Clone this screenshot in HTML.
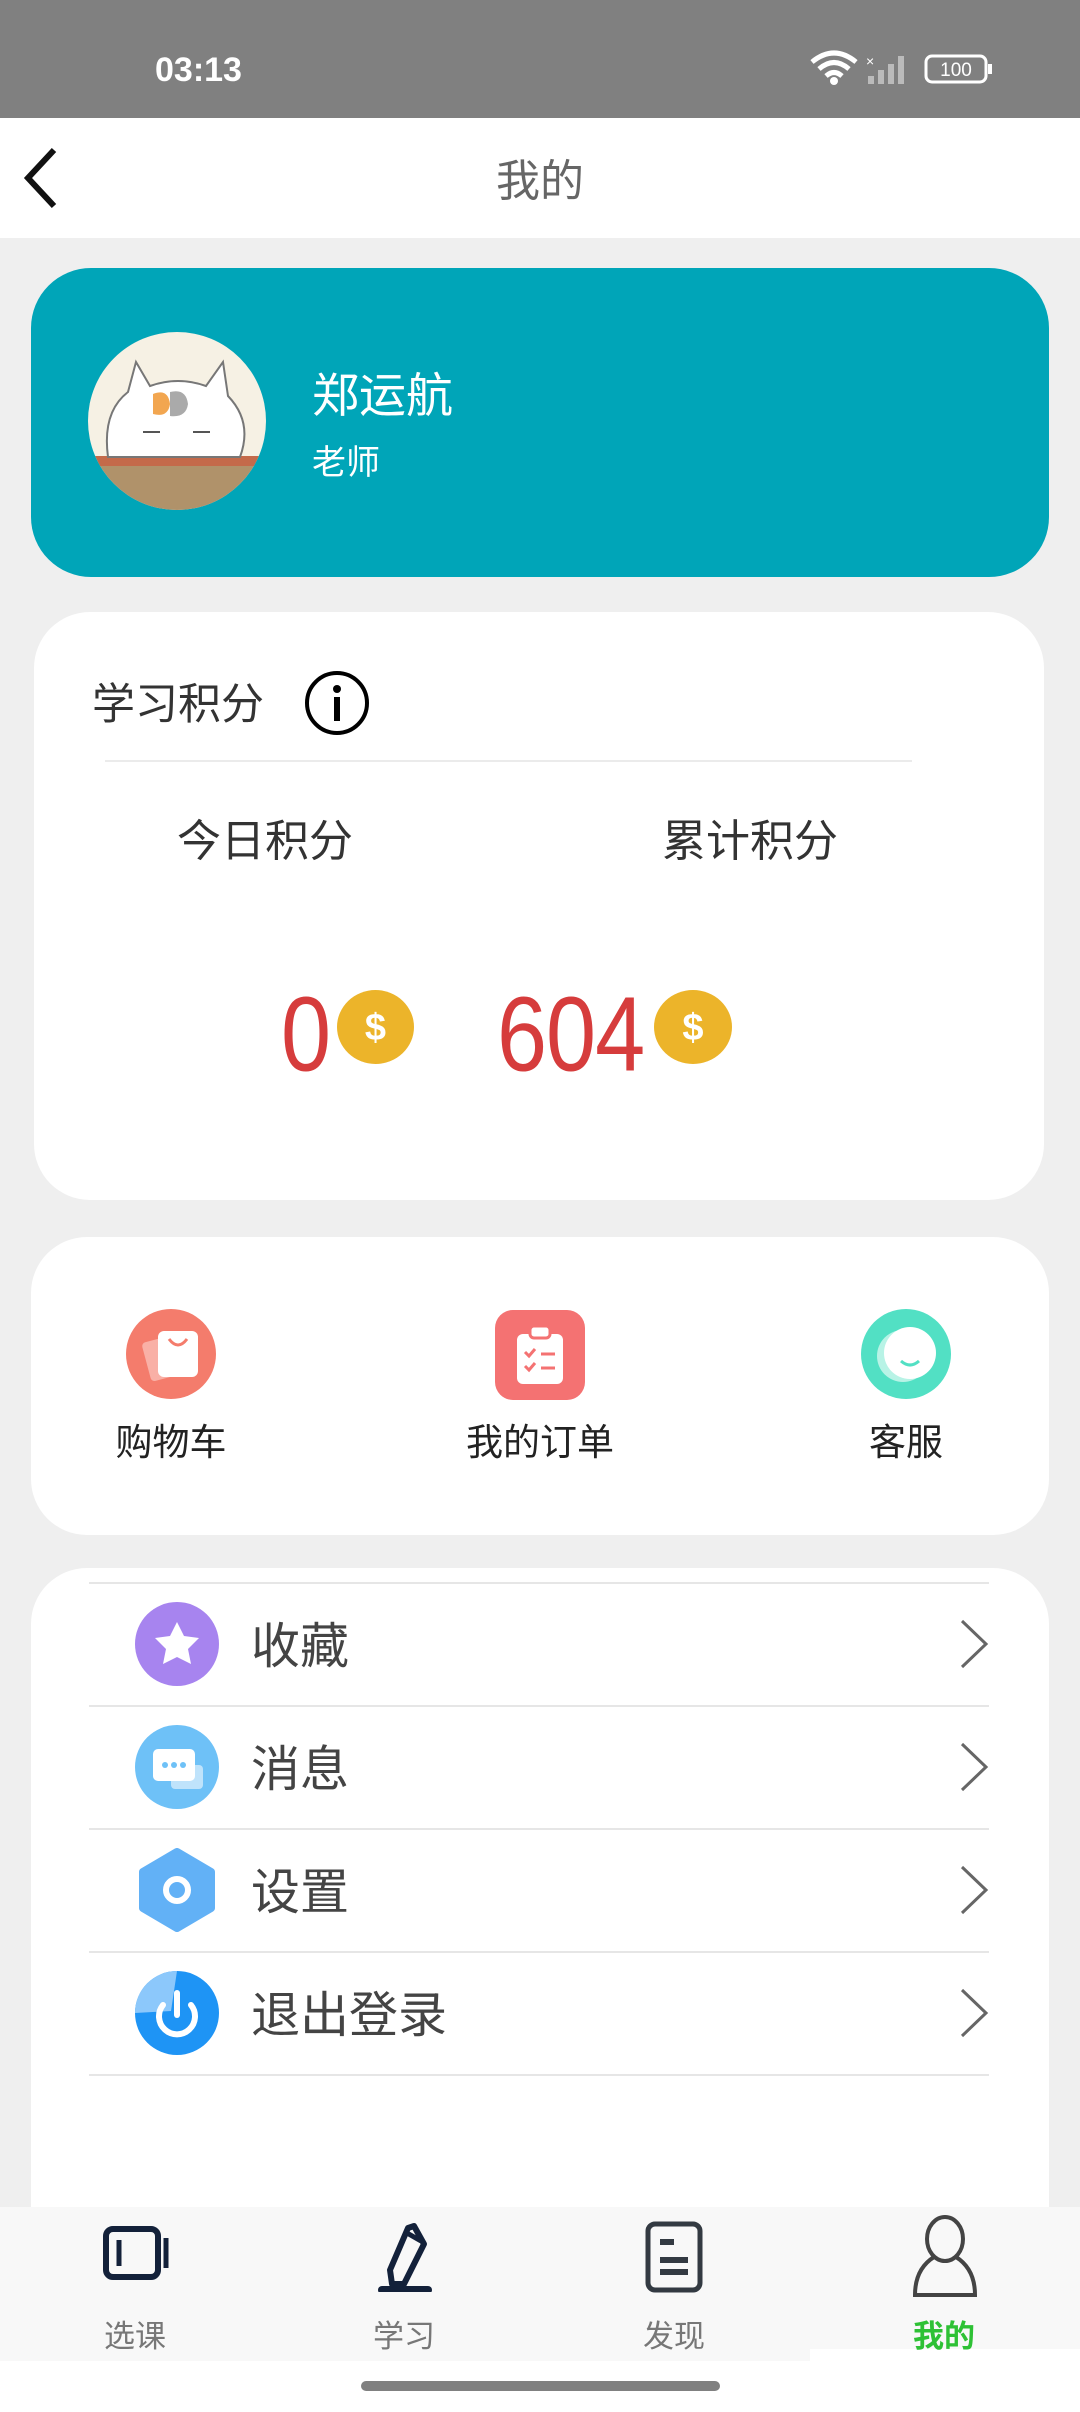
<!DOCTYPE html>
<html><head><meta charset="utf-8"><style>
*{margin:0;padding:0;box-sizing:border-box}
body{width:1080px;height:2412px;background:#efefef;position:relative;overflow:hidden;font-family:"Liberation Sans","Noto Sans CJK SC",sans-serif}
.a{position:absolute}
.card{position:absolute;background:#fff;border-radius:56px}
.t{position:absolute;white-space:nowrap;line-height:1}
.row{position:absolute;left:89px;width:900px;height:2px;background:#e6e6e6}
.lbl{position:absolute;left:251px;font-size:49px;color:#444;line-height:1}
.chev{position:absolute;left:958px;width:34px;height:52px}
</style></head><body>
<div class="a" style="left:0;top:0;width:1080px;height:118px;background:#808080"></div>
<div class="t" style="left:155px;top:53px;font-size:34px;font-weight:bold;color:#fff">03:13</div>
<svg class="a" style="left:808px;top:48px" width="190" height="40" viewBox="0 0 190 40">
<path d="M4 14 Q26 -4 48 14" stroke="#fff" stroke-width="5" fill="none"/>
<path d="M11 21 Q26 8 41 21" stroke="#fff" stroke-width="5" fill="none"/>
<path d="M18 28 Q26 21 34 28" stroke="#fff" stroke-width="5" fill="none"/>
<circle cx="26" cy="33" r="4" fill="#fff"/>
<text x="58" y="18" font-size="14" fill="#fff" font-family="Liberation Sans">×</text>
<rect x="60" y="28" width="6" height="8" fill="#bbb"/><rect x="70" y="22" width="6" height="14" fill="#bbb"/><rect x="80" y="16" width="6" height="20" fill="#bbb"/><rect x="90" y="8" width="6" height="28" fill="#bbb"/>
<rect x="118" y="8" width="60" height="26" rx="6" stroke="#fff" stroke-width="3" fill="none"/>
<rect x="180" y="16" width="4" height="10" fill="#fff"/>
<text x="148" y="28" font-size="19" fill="#fff" text-anchor="middle" font-family="Liberation Sans">100</text>
</svg>
<div class="a" style="left:0;top:118px;width:1080px;height:120px;background:#fff"></div>
<svg class="a" style="left:18px;top:146px" width="44" height="64"><path d="M36 4 L10 32 L36 60" stroke="#111" stroke-width="6" fill="none"/></svg>
<div class="t" style="left:0;width:1080px;text-align:center;top:160px;font-size:44px;color:#666">我的</div>

<div class="a" style="left:31px;top:268px;width:1018px;height:309px;background:#00a5b8;border-radius:60px"></div>
<svg class="a" style="left:88px;top:332px" width="178" height="178" viewBox="0 0 178 178">
<defs><clipPath id="c"><circle cx="89" cy="89" r="89"/></clipPath></defs>
<g clip-path="url(#c)"><rect width="178" height="178" fill="#f6f1e4"/>
<rect x="0" y="130" width="178" height="48" fill="#b0926a"/>
<rect x="0" y="124" width="178" height="10" fill="#c46a4a"/>
<path d="M20 125 Q14 80 40 60 L48 30 L62 54 Q90 44 118 54 L135 30 L140 64 Q165 90 152 125 Z" fill="#fff" stroke="#777" stroke-width="2"/>
<path d="M65 62 Q80 56 82 72 Q80 86 65 82 Z" fill="#f2a650"/>
<path d="M82 60 Q98 56 100 72 Q98 86 82 84 Z" fill="#aaa"/>
<path d="M55 100 L72 100 M105 100 L122 100" stroke="#555" stroke-width="2"/>
</g></svg>
<div class="t" style="left:312px;top:372px;font-size:47px;color:#fff">郑运航</div>
<div class="t" style="left:312px;top:446px;font-size:34px;color:#fff">老师</div>

<div class="card" style="left:34px;top:612px;width:1010px;height:588px"></div>
<div class="t" style="left:92px;top:684px;font-size:43px;color:#333">学习积分</div>
<svg class="a" style="left:304px;top:670px" width="66" height="66"><circle cx="33" cy="33" r="30" stroke="#000" stroke-width="4" fill="none"/><circle cx="33" cy="19" r="4" fill="#000"/><rect x="30" y="27" width="6" height="24" fill="#000"/></svg>
<div class="a" style="left:105px;top:760px;width:807px;height:2px;background:#ebebeb"></div>
<div class="t" style="left:165px;width:200px;text-align:center;top:820px;font-size:44px;color:#333">今日积分</div>
<div class="t" style="left:650px;width:200px;text-align:center;top:820px;font-size:44px;color:#333">累计积分</div>
<div class="t" style="left:281px;top:982px;font-size:90px;color:#d63c3c;transform:scaleY(1.18);transform-origin:left top">0</div>
<div class="t" style="left:497px;top:982px;font-size:90px;color:#d63c3c;transform:scaleY(1.18);transform-origin:left top;letter-spacing:-1px">604</div>
<svg class="a" style="left:337px;top:990px" width="77" height="74"><ellipse cx="38.5" cy="37" rx="38.5" ry="37" fill="#ecb42a"/><text x="38.5" y="50" font-size="38" font-weight="bold" fill="#fff" text-anchor="middle" font-family="Liberation Sans">$</text></svg>
<svg class="a" style="left:654px;top:990px" width="78" height="74"><ellipse cx="39" cy="37" rx="39" ry="37" fill="#ecb42a"/><text x="39" y="50" font-size="38" font-weight="bold" fill="#fff" text-anchor="middle" font-family="Liberation Sans">$</text></svg>

<div class="card" style="left:31px;top:1237px;width:1018px;height:298px"></div>
<svg class="a" style="left:126px;top:1309px" width="90" height="90"><ellipse cx="45" cy="45" rx="45" ry="45" fill="#f47c6c"/><rect x="20" y="30" width="28" height="40" rx="4" fill="#f9b0a6" transform="rotate(-15 34 50)"/><rect x="32" y="22" width="40" height="46" rx="6" fill="#fff"/><path d="M43 30 Q52 42 61 30" stroke="#f47c6c" stroke-width="3" fill="none"/></svg>
<svg class="a" style="left:495px;top:1310px" width="90" height="90"><rect width="90" height="90" rx="18" fill="#f47272"/><rect x="22" y="24" width="46" height="50" rx="6" fill="#fff"/><rect x="35" y="16" width="20" height="12" rx="4" fill="#fff" stroke="#f47272" stroke-width="3"/><path d="M30 42 l4 4 l6 -7 M30 56 l4 4 l6 -7" stroke="#f47272" stroke-width="3" fill="none"/><path d="M46 44 h14 M46 58 h14" stroke="#f47272" stroke-width="3"/></svg>
<svg class="a" style="left:861px;top:1309px" width="90" height="90"><circle cx="45" cy="45" r="45" fill="#52e0c4"/><circle cx="42" cy="47" r="26" fill="#b8f3e6"/><circle cx="49" cy="44" r="26" fill="#fff"/><path d="M40 52 Q49 60 58 52" stroke="#52e0c4" stroke-width="3" fill="none"/></svg>
<div class="t" style="left:91px;width:160px;text-align:center;top:1424px;font-size:37px;color:#222">购物车</div>
<div class="t" style="left:440px;width:200px;text-align:center;top:1424px;font-size:37px;color:#222">我的订单</div>
<div class="t" style="left:826px;width:160px;text-align:center;top:1424px;font-size:37px;color:#222">客服</div>

<div class="card" style="left:31px;top:1568px;width:1018px;height:700px"></div>
<div class="row" style="top:1582px"></div>
<div class="row" style="top:1705px"></div>
<div class="row" style="top:1828px"></div>
<div class="row" style="top:1951px"></div>
<div class="row" style="top:2074px"></div>

<svg class="a" style="left:135px;top:1602px" width="84" height="84"><circle cx="42" cy="42" r="42" fill="#a784ef"/><path d="M42 20 L49 34 L64 36 L53 47 L56 62 L42 55 L28 62 L31 47 L20 36 L35 34 Z" fill="#fff"/></svg>
<div class="lbl" style="top:1623px">收藏</div>
<svg class="a" style="left:135px;top:1725px" width="84" height="84"><circle cx="42" cy="42" r="42" fill="#6ec1f7"/><rect x="36" y="40" width="32" height="24" rx="4" fill="#bfe3fb"/><rect x="18" y="24" width="42" height="32" rx="5" fill="#fff"/><circle cx="30" cy="40" r="3" fill="#6ec1f7"/><circle cx="39" cy="40" r="3" fill="#6ec1f7"/><circle cx="48" cy="40" r="3" fill="#6ec1f7"/></svg>
<div class="lbl" style="top:1746px">消息</div>
<svg class="a" style="left:135px;top:1848px" width="84" height="84"><path d="M42 4 L76 24 L76 60 L42 80 L8 60 L8 24 Z" fill="#62b1f6" stroke="#62b1f6" stroke-width="8" stroke-linejoin="round"/><circle cx="42" cy="42" r="11" fill="none" stroke="#fff" stroke-width="6"/></svg>
<div class="lbl" style="top:1869px">设置</div>
<svg class="a" style="left:135px;top:1971px" width="84" height="84"><circle cx="42" cy="42" r="42" fill="#1e94f5"/><path d="M0 42 A42 42 0 0 1 42 0 L36 40 Z" fill="#8cc8fb"/><path d="M28 34 A18 18 0 1 0 56 34" stroke="#fff" stroke-width="6" fill="none" stroke-linecap="round"/><path d="M42 22 V44" stroke="#fff" stroke-width="6" stroke-linecap="round"/></svg>
<div class="lbl" style="top:1992px">退出登录</div>
<svg class="chev" style="top:1618px" viewBox="0 0 34 52"><path d="M4 3 L28 26 L4 49" stroke="#666" stroke-width="3" fill="none"/></svg>
<svg class="chev" style="top:1741px" viewBox="0 0 34 52"><path d="M4 3 L28 26 L4 49" stroke="#666" stroke-width="3" fill="none"/></svg>
<svg class="chev" style="top:1864px" viewBox="0 0 34 52"><path d="M4 3 L28 26 L4 49" stroke="#666" stroke-width="3" fill="none"/></svg>
<svg class="chev" style="top:1987px" viewBox="0 0 34 52"><path d="M4 3 L28 26 L4 49" stroke="#666" stroke-width="3" fill="none"/></svg>

<div class="a" style="left:0;top:2207px;width:1080px;height:205px;background:#fff"></div>
<div class="a" style="left:0;top:2207px;width:810px;height:154px;background:#f8f8f8"></div>
<div class="a" style="left:810px;top:2207px;width:270px;height:142px;background:#f8f8f8"></div>
<svg class="a" style="left:102px;top:2225px" width="70" height="60"><rect x="4" y="4" width="52" height="48" rx="7" stroke="#13213a" stroke-width="6" fill="none"/><path d="M17 15 V41 M64 13 V43" stroke="#13213a" stroke-width="5"/></svg>
<svg class="a" style="left:374px;top:2220px" width="60" height="72"><path d="M40 6 L50 24 L30 64 L18 64 L16 50 L34 8 Z" stroke="#13213a" stroke-width="6" fill="none" stroke-linejoin="round"/><path d="M33 13 L47 21" stroke="#13213a" stroke-width="5"/><rect x="4" y="66" width="54" height="8" rx="4" fill="#13213a"/></svg>
<svg class="a" style="left:644px;top:2220px" width="62" height="76"><rect x="4" y="4" width="52" height="66" rx="7" stroke="#333a42" stroke-width="5" fill="none"/><path d="M16 22 H30 M16 40 H44 M16 52 H44" stroke="#333a42" stroke-width="6"/></svg>
<svg class="a" style="left:912px;top:2215px" width="66" height="84"><ellipse cx="33" cy="24" rx="18" ry="22" stroke="#444" stroke-width="4" fill="none"/><path d="M22 42 Q3 54 3 80 H63 Q63 54 44 42" stroke="#444" stroke-width="4" fill="none"/></svg>
<div class="t" style="left:85px;width:100px;text-align:center;top:2321px;font-size:31px;color:#777">选课</div>
<div class="t" style="left:354px;width:100px;text-align:center;top:2321px;font-size:31px;color:#777">学习</div>
<div class="t" style="left:624px;width:100px;text-align:center;top:2321px;font-size:31px;color:#777">发现</div>
<div class="t" style="left:894px;width:100px;text-align:center;top:2321px;font-size:31px;color:#2ec135;font-weight:bold">我的</div>
<div class="a" style="left:361px;top:2381px;width:359px;height:10px;border-radius:5px;background:#808080"></div>
</body></html>
